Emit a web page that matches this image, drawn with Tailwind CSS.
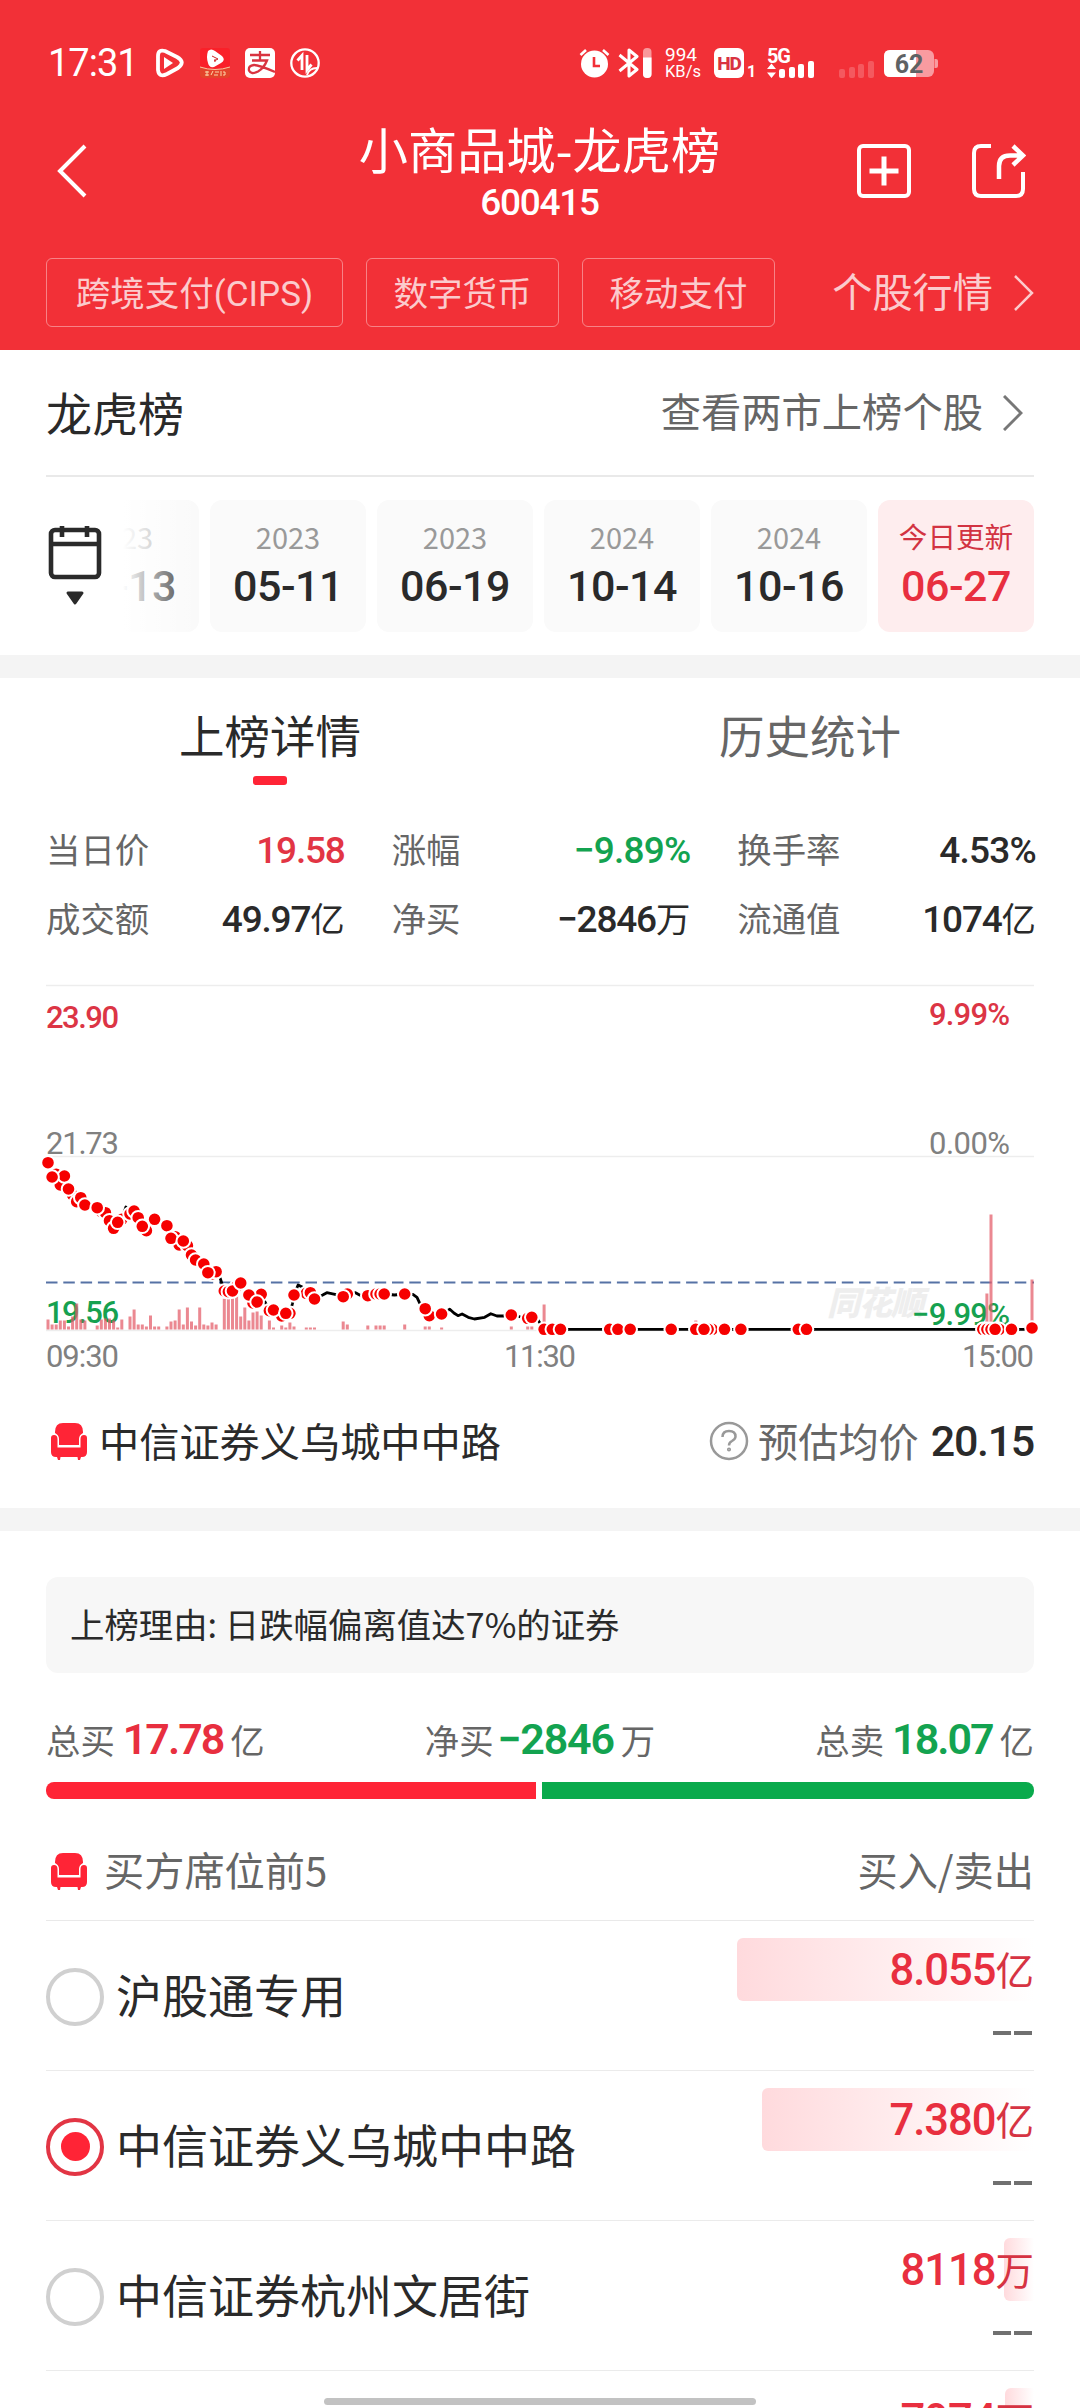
<!DOCTYPE html>
<html lang="zh-CN">

<head>
    <meta charset="UTF-8">
    <meta name="viewport" content="width=device-width, initial-scale=1.0">
    <title>小商品城-龙虎榜</title>
    <script src="https://cdn.jsdelivr.net/npm/@tailwindcss/browser@4"></script>
</head>

<body class="bg-white">
    <div class="relative w-[1080px] h-[2408px] overflow-hidden bg-white text-[#2a2a2a] font-['Noto_Sans_CJK_SC',sans-serif]">

        <!-- Header -->
        <header class="h-[350px] bg-[#f23037] text-white pt-[38px]">

            <!-- Status bar -->
            <div class="h-[50px] flex items-center pl-[48px] pr-[142px]">
                <span class="w-[107px] font-[Roboto] text-[38px] tracking-[-1px] leading-none">17:31</span>
                <div class="flex items-center gap-[15px]">
                    <svg class="w-[30px] h-[30px]" viewBox="0 0 30 30" fill="none">
                        <path d="M3 8Q3 1 10 3L22 9Q31 14 23 20L12 26Q4 30 3 22Z" stroke="#fff" stroke-width="3.8" stroke-linejoin="round" />
                        <path d="M9 9V21L18 15Z" fill="#fff" />
                    </svg>
                    <svg class="w-[30px] h-[30px]" viewBox="0 0 30 30">
                        <rect width="30" height="30" rx="3" fill="#fa2029" />
                        <path d="M0 19Q15 24 30 19V27Q30 30 27 30H3Q0 30 0 27Z" fill="#e4432b" />
                        <path d="M0 19Q15 24 30 19" stroke="#f7c9a0" fill="none" />
                        <path d="M8 3Q11 0 15 3L22 8Q26 12 21 15L14 19Q9 20 8 15Q6 9 8 3Z" fill="#fff" />
                        <path d="M12 8L18 11L14 13M15 11V14" stroke="#c22" fill="none" />
                        <path d="M5 24H9M5 27H9M7 23V28M11 27L13 23M15 24H19M14 27H18M21 23V28M23 24H25V27H23" stroke="#fbd9a8" fill="none" />
                    </svg>
                    <svg class="w-[30px] h-[30px]" viewBox="0 0 30 30" fill="none">
                        <rect width="30" height="30" rx="5" fill="#fff" />
                        <path d="M5 7H25M15 3V12M7 12.500H22Q19 20 13 23.500Q6 27 4 22.500Q3 17.500 9 17Q14 17 30 24" stroke="#d93340" stroke-width="2.300" />
                    </svg>
                    <svg class="w-[30px] h-[30px]" viewBox="0 0 30 30" fill="none" stroke="#fff">
                        <circle cx="15" cy="15" r="13.700" stroke-width="2.300" />
                        <path d="M7.500 12.500L12 7.500V22M17 7V22L21.500 16.500" stroke-width="2.800" />
                        <path d="M17 27Q19 20 27 20" stroke-width="2" />
                    </svg>
                </div>
                <div class="ml-auto flex items-center">
                    <svg class="w-[31px] h-[30px]" viewBox="0 0 31 30" fill="none">
                        <circle cx="15.500" cy="16" r="13.500" fill="#fff" />
                        <path d="M1.500 7L7 2M29.500 7L24 2" stroke="#fff" stroke-width="2.600" />
                        <path d="M15 9V18H21" stroke="#f23037" stroke-width="2.600" />
                    </svg>
                    <svg class="ml-2 w-[34px] h-[30px]" viewBox="0 0 34 30" fill="none">
                        <path d="M1.500 7L19 21.500L11 28V2L19 8.500L1.500 23" stroke="#fff" stroke-width="3" stroke-linejoin="round" />
                        <rect x="25" width="8.500" height="30" rx="4" fill="#fff" fill-opacity=".5" />
                        <path d="M25 9.500H33.500V26Q33.500 30 29.300 30Q25 30 25 26Z" fill="#fff" />
                    </svg>
                    <div class="ml-[13px] w-[49px] font-[Roboto] leading-[17px] whitespace-nowrap">
                        <div class="text-[19px]">994</div>
                        <div class="text-[16.5px]">KB/s</div>
                    </div>
                    <div class="flex items-center justify-center w-[30px] h-[30px] rounded-md bg-white text-[#d93340] font-[Roboto] font-extrabold text-[19px] leading-none tracking-[-1px]">HD</div>
                    <span class="ml-[3px] mt-[17px] w-[20px] font-[Roboto] font-bold text-[16px] leading-none">1</span>
                    <svg class="w-[48px] h-[32px] overflow-visible" viewBox="0 0 48 32" fill="#fff">
                        <text x="0" y="15.500" font-family="Roboto" font-weight="bold" font-size="20" textLength="24">5G</text>
                        <path d="M0 22L4.500 16.500L9 22ZM0 25.500L4.500 31L9 25.500Z" />
                        <rect x="12" y="22" width="6" height="9" rx="2" />
                        <rect x="22" y="20" width="6" height="11" rx="2" />
                        <rect x="31" y="17" width="6" height="14" rx="2" />
                        <rect x="41" y="14" width="6" height="17" rx="2" />
                    </svg>
                    <svg class="ml-6 w-[36px] h-[32px]" viewBox="0 0 36 32" fill="#fff" fill-opacity=".2">
                        <rect x="0" y="22" width="6" height="9" rx="2" />
                        <rect x="10" y="20" width="6" height="11" rx="2" />
                        <rect x="19" y="17" width="6" height="14" rx="2" />
                        <rect x="29" y="14" width="6" height="17" rx="2" />
                    </svg>
                    <svg class="ml-[9px] w-[54px] h-[28px]" viewBox="0 0 54 28">
                        <rect y="1" width="50" height="27" rx="6" fill="#f99ba0" />
                        <path d="M50.500 10H52Q54 10 54 12V17Q54 19 52 19H50.500Z" fill="#f99ba0" />
                        <path d="M32 1H6Q0 1 0 7V22Q0 28 6 28H32Z" fill="#fff" />
                        <text x="25" y="23.500" text-anchor="middle" font-family="Roboto" font-weight="bold" font-size="25" fill="#5e6264">62</text>
                    </svg>
                </div>
            </div>

            <!-- Title row -->
            <div class="mt-[25px] h-[116px] grid grid-cols-[1fr_auto_1fr] items-center pl-[57px] pr-[54px]">
                <svg class="w-[30px] h-[54px]" viewBox="0 0 30 54" fill="none" stroke="#fff" stroke-width="4">
                    <path d="M28 2L3 27L28 52" />
                </svg>
                <div class="text-center -mt-1 -ml-1">
                    <div class="text-[49.2px] leading-[64px]">小商品城-龙虎榜</div>
                    <div class="mt-[3px] font-[Roboto] font-medium text-[37px] tracking-[-1.3px] leading-[40px]">600415</div>
                </div>
                <div class="flex justify-end gap-[61px]">
                    <svg class="w-[54px] h-[54px]" viewBox="0 0 54 54" fill="none" stroke="#fff" stroke-width="4">
                        <rect x="2" y="2" width="50" height="50" rx="4" />
                        <path d="M12.500 27H41.500M27 12.500V41.500" stroke-width="5" />
                    </svg>
                    <svg class="w-[54px] h-[54px]" viewBox="0 0 54 54" fill="none" stroke="#fff" stroke-width="4">
                        <path d="M19 2H9Q2 2 2 9V45Q2 52 9 52H44Q51 52 51 45V28" />
                        <path d="M27 35V22Q27 11.500 38 11.500H50M41 2L51 11.500L41 21" stroke-width="4.500" />
                    </svg>
                </div>
            </div>

            <!-- Concept tags -->
            <div class="mt-[29px] flex items-center pl-[46px] pr-[46px] text-[34.5px] text-white/75">
                <span class="w-[297px] h-[69px] text-center leading-[65px] border border-white/40 rounded-md">跨境支付<span class="font-[Roboto] text-[35px]">(CIPS)</span></span>
                <span class="ml-[23px] w-[193px] h-[69px] text-center leading-[65px] border border-white/40 rounded-md">数字货币</span>
                <span class="ml-[23px] w-[193px] h-[69px] text-center leading-[65px] border border-white/40 rounded-md">移动支付</span>
                <span class="ml-auto pb-[5px] text-[40.2px] leading-none">个股行情</span>
                <svg class="ml-[21px] w-[20px] h-[36px]" viewBox="0 0 20 36" fill="none" stroke="currentColor" stroke-width="2.500">
                    <path d="M1 1L18 18L1 35" />
                </svg>
            </div>
        </header>

        <!-- Section title -->
        <section class="px-[46px]">
            <div class="h-[127px] flex items-center justify-between border-b-2 border-[#e9e9e9]">
                <h2 class="text-[46px] pb-[2px]">龙虎榜</h2>
                <a class="flex items-center text-[40.3px] text-[#666] pr-[11px] pb-1">查看两市上榜个股
                    <svg class="ml-[20px] mt-1 w-[20px] h-[36px]" viewBox="0 0 20 36" fill="none" stroke="#777" stroke-width="3">
                        <path d="M1 1L18 18L1 35" />
                    </svg>
                </a>
            </div>

            <!-- Date picker -->
            <div class="h-[178px] flex items-center">
                <svg class="w-[77px] h-[82px] pl-[2px] shrink-0" viewBox="0 0 75 82" fill="none" stroke="#2a2a2a" stroke-width="4.600">
                    <rect x="3" y="5" width="48" height="47" rx="4" />
                    <path d="M3 19H51M14 1V12M39 1V12" />
                    <path d="M20 68H34L27 78Z" fill="#2a2a2a" stroke-width="3" stroke-linejoin="round" />
                </svg>
                <div class="relative flex-1 h-[132px] flex justify-end gap-[11px] overflow-hidden">
                    <div class="w-[156px] shrink-0 rounded-xl bg-[#fafafa] text-center pt-[16px]">
                        <div class="text-[29px] leading-[40px] text-[#999]">2023</div>
                        <div class="mt-[3px] font-[Roboto] font-medium text-[43px] leading-[54px] tracking-[-.5px]">04-13</div>
                    </div>
                    <div class="w-[156px] shrink-0 rounded-xl bg-[#fafafa] text-center pt-[16px]">
                        <div class="text-[29px] leading-[40px] text-[#999]">2023</div>
                        <div class="mt-[3px] font-[Roboto] font-medium text-[43px] leading-[54px] tracking-[-.5px]">05-11</div>
                    </div>
                    <div class="w-[156px] shrink-0 rounded-xl bg-[#fafafa] text-center pt-[16px]">
                        <div class="text-[29px] leading-[40px] text-[#999]">2023</div>
                        <div class="mt-[3px] font-[Roboto] font-medium text-[43px] leading-[54px] tracking-[-.5px]">06-19</div>
                    </div>
                    <div class="w-[156px] shrink-0 rounded-xl bg-[#fafafa] text-center pt-[16px]">
                        <div class="text-[29px] leading-[40px] text-[#999]">2024</div>
                        <div class="mt-[3px] font-[Roboto] font-medium text-[43px] leading-[54px] tracking-[-.5px]">10-14</div>
                    </div>
                    <div class="w-[156px] shrink-0 rounded-xl bg-[#fafafa] text-center pt-[16px]">
                        <div class="text-[29px] leading-[40px] text-[#999]">2024</div>
                        <div class="mt-[3px] font-[Roboto] font-medium text-[43px] leading-[54px] tracking-[-.5px]">10-16</div>
                    </div>
                    <div class="w-[156px] shrink-0 rounded-xl bg-[#feedee] text-center pt-[16px] text-[#e82f3f]">
                        <div class="text-[28.6px] leading-[40px] text-[#d23342]">今日更新</div>
                        <div class="mt-[3px] font-[Roboto] font-medium text-[43px] leading-[54px] tracking-[-.5px]">06-27</div>
                    </div>
                    <!-- Fade on the scrolled edge -->
                    <div class="absolute left-0 top-0 w-[76px] h-full bg-linear-to-r from-white to-white/0"></div>
                </div>
            </div>
        </section>

        <div class="h-[23px] bg-[#f4f4f4]"></div>

        <!-- Tabs -->
        <nav class="h-[107px] grid grid-cols-2 text-center text-[45.5px] leading-[112px]">
            <div class="flex flex-col items-center">上榜详情
                <i class="-mt-[14px] w-[34px] h-[9px] rounded-[3px] bg-[#ff2436]"></i>
            </div>
            <div class="text-[#666]">历史统计</div>
        </nav>

        <!-- Day figures -->
        <section class="mt-[29px] pl-[46px] pr-[44px] grid grid-cols-3 auto-rows-[69px] gap-x-[47px] text-[34.4px] leading-[69px]">
            <div class="flex justify-between items-baseline"><span class="text-[#666]">当日价</span><b class="font-[Roboto] font-medium text-[37px] tracking-[-1.2px] text-[#e23544]">19.58</b></div>
            <div class="flex justify-between items-baseline"><span class="text-[#666]">涨幅</span><b class="font-[Roboto] font-medium text-[37px] tracking-[-.8px] text-[#13a350]">−9.89%</b></div>
            <div class="flex justify-between items-baseline"><span class="text-[#666]">换手率</span><b class="font-[Roboto] font-medium text-[37px] tracking-[-.8px]">4.53%</b></div>
            <div class="flex justify-between items-baseline"><span class="text-[#666]">成交额</span><span><b class="font-[Roboto] font-medium text-[37px] tracking-[-1.2px]">49.97</b>亿</span></div>
            <div class="flex justify-between items-baseline"><span class="text-[#666]">净买</span><span><b class="font-[Roboto] font-medium text-[37px] tracking-[-1.2px]">−2846</b>万</span></div>
            <div class="flex justify-between items-baseline"><span class="text-[#666]">流通值</span><span><b class="font-[Roboto] font-medium text-[37px] tracking-[-1.2px]">1074</b>亿</span></div>
        </section>

        <!-- Intraday chart -->
        <svg id="chart" class="mt-[18px] w-[1080px] h-[410px] block" viewBox="0 970 1080 410" font-family="Roboto" font-size="31">
            <g stroke="#ededed" stroke-width="1.500">
                <path d="M46 985.500H1034M46 1156.500H1034M46 1330.500H1034" />
            </g>
            <text x="827" y="1315" font-family="Noto Sans CJK SC" font-weight="900" font-size="33" font-style="italic" fill="#eeeeee" textLength="97">同花顺</text>
            <path d="M46 1282.500H1034" stroke="#5672a5" stroke-width="1.800" stroke-dasharray="11.500 5.800" />
            <g font-weight="500">
                <text x="46" y="1028" textLength="73" fill="#dc3545">23.90</text>
                <text x="1010" y="1025" text-anchor="end" textLength="81" fill="#dc3545">9.99%</text>
                <text x="46" y="1323" textLength="73" fill="#16a150">19.56</text>
                <text x="1010" y="1325" text-anchor="end" textLength="98" fill="#16a150">−9.99%</text>
            </g>
            <g fill="#808080">
                <text x="46" y="1154" textLength="73">21.73</text>
                <text x="1010" y="1154" text-anchor="end" textLength="81">0.00%</text>
                <text x="46" y="1367" textLength="73">09:30</text>
                <text x="540" y="1367" text-anchor="middle" textLength="72">11:30</text>
                <text x="1034" y="1367" text-anchor="end" textLength="72">15:00</text>
            </g>
            <g id="bars" fill="#e35a66" fill-opacity=".72"></g>
            <path id="line" fill="none" stroke="#000" stroke-width="2.800" stroke-linejoin="round" />
            <g id="dots" fill="#f60000" stroke="#fff" stroke-width="2"></g>
        </svg>

        <!-- Selected seat -->
        <section class="px-[46px] h-[128px] pb-[6px] flex items-center text-[40.2px]">
            <svg class="ml-[4px] w-[38px] h-[38px]" viewBox="0 0 38 38" fill="#ff2436">
                <path d="M5 10Q5 1 13 1H25Q33 1 33 10V11Q29 13 29 17V23H9V17Q9 13 5 11Z" />
                <path d="M1 16Q1 13 4 13Q7.500 13 7.500 17V25.500H30.500V17Q30.500 13 34 13Q37 13 37 16V30Q37 35 32 35H31L30 38H28L27.500 35H10.500L10 38H8L7 35H6Q1 35 1 30Z" />
            </svg>
            <span class="ml-[11px] pb-[2px]">中信证券义乌城中中路</span>
            <svg class="ml-auto w-[40px] h-[40px]" viewBox="0 0 40 40" fill="none" stroke="#999" stroke-width="2.500">
                <circle cx="20" cy="20" r="18" />
                <path d="M13.500 16Q13.500 10 20 10Q26.500 10 26.500 15.500Q26.500 18 23 20Q20 21.500 20 24.500" />
                <circle cx="20" cy="28.500" r=".8" />
            </svg>
            <span class="ml-[9px] pb-[2px] text-[#666]">预估均价</span>
            <b class="ml-[12px] font-[Roboto] font-medium text-[43px] tracking-[-1.3px]">20.15</b>
        </section>

        <div class="h-[23px] bg-[#f4f4f4]"></div>

        <!-- Reason and totals -->
        <section class="px-[46px] pt-[46px]">
            <div class="h-[96px] rounded-xl bg-[#f7f7f7] px-6 pb-[2px] flex items-center text-[34.4px]">上榜理由: 日跌幅偏离值达7%的证券</div>

            <div class="mt-[34px] h-[62px] flex justify-between items-baseline text-[34.4px] text-[#666]">
                <div>总买<b class="ml-[8px] mr-[7px] font-[Roboto] font-semibold text-[43px] tracking-[-2px] text-[#e82f3f]">17.78</b>亿</div>
                <div>净买<b class="ml-[4px] mr-[7px] font-[Roboto] font-semibold text-[43px] tracking-[-1.2px] text-[#13a350]">−2846</b>万</div>
                <div>总卖<b class="ml-[8px] mr-[7px] font-[Roboto] font-semibold text-[43px] tracking-[-2px] text-[#13a350]">18.07</b>亿</div>
            </div>
            <div class="mt-[13px] h-[17px] flex gap-[6px]">
                <div class="w-[490px] rounded-l-lg bg-[#ff2436]"></div>
                <div class="flex-1 rounded-r-lg bg-[#09aa4c]"></div>
            </div>

            <div class="h-[122px] pt-[22px] flex items-center border-b border-[#e9e9e9] text-[40.2px] text-[#666]">
                <svg class="ml-[4px] w-[38px] h-[38px]" viewBox="0 0 38 38" fill="#ff2436">
                    <path d="M5 10Q5 1 13 1H25Q33 1 33 10V11Q29 13 29 17V23H9V17Q9 13 5 11Z" />
                    <path d="M1 16Q1 13 4 13Q7.500 13 7.500 17V25.500H30.500V17Q30.500 13 34 13Q37 13 37 16V30Q37 35 32 35H31L30 38H28L27.500 35H10.500L10 38H8L7 35H6Q1 35 1 30Z" />
                </svg>
                <span class="ml-[16px] pb-[2px]">买方席位前5</span>
                <span class="ml-auto pb-[2px]">买入/卖出</span>
            </div>
        </section>

        <!-- Seats -->
        <section id="seats" class="px-[46px]"></section>

        <!-- Home indicator -->
        <div class="absolute left-[324px] top-[2398px] w-[432px] h-[7px] rounded-full bg-[#c2c2c2]"></div>
    </div>

    <script>
        const seats = [
            { name: '沪股通专用', buy: '8.055', unit: '亿', bar: 297 },
            { name: '中信证券义乌城中中路', buy: '7.380', unit: '亿', bar: 272, selected: true },
            { name: '中信证券杭州文居街', buy: '8118', unit: '万', bar: 30 },
            { name: '', buy: '7974', unit: '万', bar: 29 },
        ];

        document.getElementById('seats').innerHTML = seats.map(seat => `
            <div class="h-[150px] flex justify-between border-b border-[#ebebeb]">
                <div class="flex items-center pt-[2px]">
                    <span class="w-[58px] h-[58px] rounded-full border-4 flex items-center justify-center ${seat.selected ? 'border-[#e23544]' : 'border-[#d0d0d0]'}">
                        ${seat.selected ? '<i class="w-[29px] h-[29px] rounded-full bg-[#ff2436]"></i>' : ''}
                    </span>
                    <span class="ml-[12px] -mt-[7px] text-[46px]">${seat.name}</span>
                </div>
                <div class="relative pt-[17px] text-right">
                    <div class="absolute right-0 top-[17px] h-[63px] rounded-l-md bg-linear-to-r from-[#ffdadd] to-white" style="width:${seat.bar}px"></div>
                    <div class="relative h-[63px] leading-[61px] text-[#d63342] text-[38.5px]"><b class="font-[Roboto] font-medium text-[43.5px] tracking-[-1px] text-[#e82f3f]">${seat.buy}</b>${seat.unit}</div>
                    <div class="mt-[30px] mr-[2px] flex justify-end gap-[3px]">
                        <i class="w-[18px] h-1 bg-[#707070]"></i>
                        <i class="w-[18px] h-1 bg-[#707070]"></i>
                    </div>
                </div>
            </div>
        `).join('');

        // minute -> x, 241 minutes across the plot
        const px = m => 48 + m * 4.1;

        // [minute, bar height]
        const bars = [
            [0, 10], [1, 5], [2, 5], [3, 9], [4, 9], [5, 3], [6, 13], [7, 26], [8, 10], [9, 9], [12, 4], [13, 10], [14, 11], [15, 11], [16, 9],
            [17, 2], [18, 10], [20, 13], [21, 20], [22, 5], [23, 5], [24, 3], [25, 14], [26, 3], [27, 3], [29, 3], [30, 8], [31, 9], [32, 20],
            [33, 5], [34, 22], [35, 8], [36, 4], [37, 22], [38, 5], [39, 4], [40, 7], [41, 5], [43, 31], [44, 31], [45, 31], [46, 34], [47, 13],
            [48, 22], [49, 9], [50, 17], [51, 18], [52, 14], [54, 9], [55, 2], [57, 4], [58, 2], [59, 7], [60, 3], [63, 2], [64, 2], [65, 2],
            [72, 8], [73, 5], [78, 4], [80, 4], [81, 4], [82, 4], [87, 5], [92, 3], [93, 3], [96, 2], [113, 3], [117, 3], [118, 3],
            [121, 25], [158, 9], [229, 36], [230, 115], [240, 50]
        ];
        document.getElementById('bars').innerHTML = bars.map(([m, h]) =>
            `<rect x="${px(m) - 1.5}" y="${1329.5 - h}" width="3" height="${h}" />`
        ).join('');

        // [minute, y, layer]: 0 = no trade dot, 1 = lower dot, 2 = upper dot
        const points = [
            [0, 1162.7, 2], [1, 1177, 2], [2, 1174.3, 1], [3, 1185, 1], [4, 1176, 1], [5, 1189, 2], [6, 1195, 1], [7, 1201.7, 1],
            [8, 1197.7, 1], [9, 1205, 2], [12, 1207.7, 2], [13, 1211.7, 1], [14, 1212.7, 1], [15, 1220.7, 1], [16, 1228.3, 1],
            [17, 1222.3, 2], [18, 1219.3, 1], [19, 1207, 0], [20, 1214, 1], [21, 1211, 1], [22, 1217.7, 1], [23, 1226.3, 2],
            [24, 1230.7, 1], [26, 1219.3, 2], [28, 1221.7, 0], [29, 1225.7, 2], [30, 1238.3, 2], [31, 1236.7, 1], [32, 1245, 1],
            [33, 1241, 2], [34, 1245.7, 1], [35, 1255, 1], [36, 1260, 1], [38, 1264, 1], [39, 1272.7, 2], [40, 1274, 1], [41, 1271.7, 1],
            [42, 1278.3, 0], [43, 1291, 1], [44, 1291.7, 1], [45, 1291, 2], [46, 1286.7, 1], [47, 1283, 2], [49, 1295, 2], [50, 1303, 1],
            [51, 1302, 2], [52, 1294.3, 1], [54, 1310.7, 1], [55, 1310, 2], [57, 1316, 1], [58, 1313.3, 2], [59, 1313.3, 1],
            [59.6, 1304, 0], [60, 1295, 2], [61, 1285, 0], [62, 1287, 0], [63, 1293.3, 1], [64, 1292.7, 1], [65, 1299, 2],
            [67, 1295, 0], [68, 1292.7, 0], [70, 1294.3, 0], [72, 1296.7, 2], [73, 1294, 1], [75, 1292.7, 0], [76, 1295, 0],
            [78, 1295.7, 1], [80, 1294, 1], [81, 1294, 1], [82, 1294, 2], [84.5, 1295, 0], [87, 1294, 2], [89, 1294.3, 0],
            [90, 1297.3, 0], [90.6, 1302.7, 0], [92, 1308.7, 2], [93, 1315.7, 1], [96, 1314, 2], [98, 1309.3, 0], [99, 1313, 0],
            [100, 1315.7, 0], [101, 1314, 0], [102.5, 1317.3, 0], [104, 1319, 0], [106.5, 1317.3, 0], [108, 1313.7, 0], [109.5, 1316, 0],
            [111, 1316, 0], [113, 1315, 2], [117, 1318.3, 1], [118, 1317.3, 2], [119.5, 1320, 0], [121, 1329.3, 1], [123, 1329.3, 1],
            [125, 1329.3, 2], [137, 1329.3, 1], [139, 1329.3, 2], [142, 1329.3, 2], [152, 1329.3, 2], [158, 1329.3, 1], [162, 1329.3, 1], [161, 1329.3, 1],
            [160, 1329.3, 2], [165, 1329.3, 2], [169, 1329.3, 2], [183, 1329.3, 1], [185, 1329.3, 2], [228, 1329.3, 1], [229, 1329.3, 1],
            [230, 1329.3, 1], [232, 1329.3, 1], [231, 1329.3, 2], [235, 1329.3, 1], [238, 1329.3, 0], [240, 1328, 2]
        ];
        document.getElementById('line').setAttribute('d', 'M' + points.map(([m, y]) => px(m) + ' ' + y).join('L'));
        document.getElementById('dots').innerHTML = [1, 2].map(layer =>
            points.filter(p => p[2] === layer).map(([m, y]) => `<circle cx="${px(m)}" cy="${y}" r="6.8" />`).join('')
        ).join('');
    </script>
</body>

</html>
